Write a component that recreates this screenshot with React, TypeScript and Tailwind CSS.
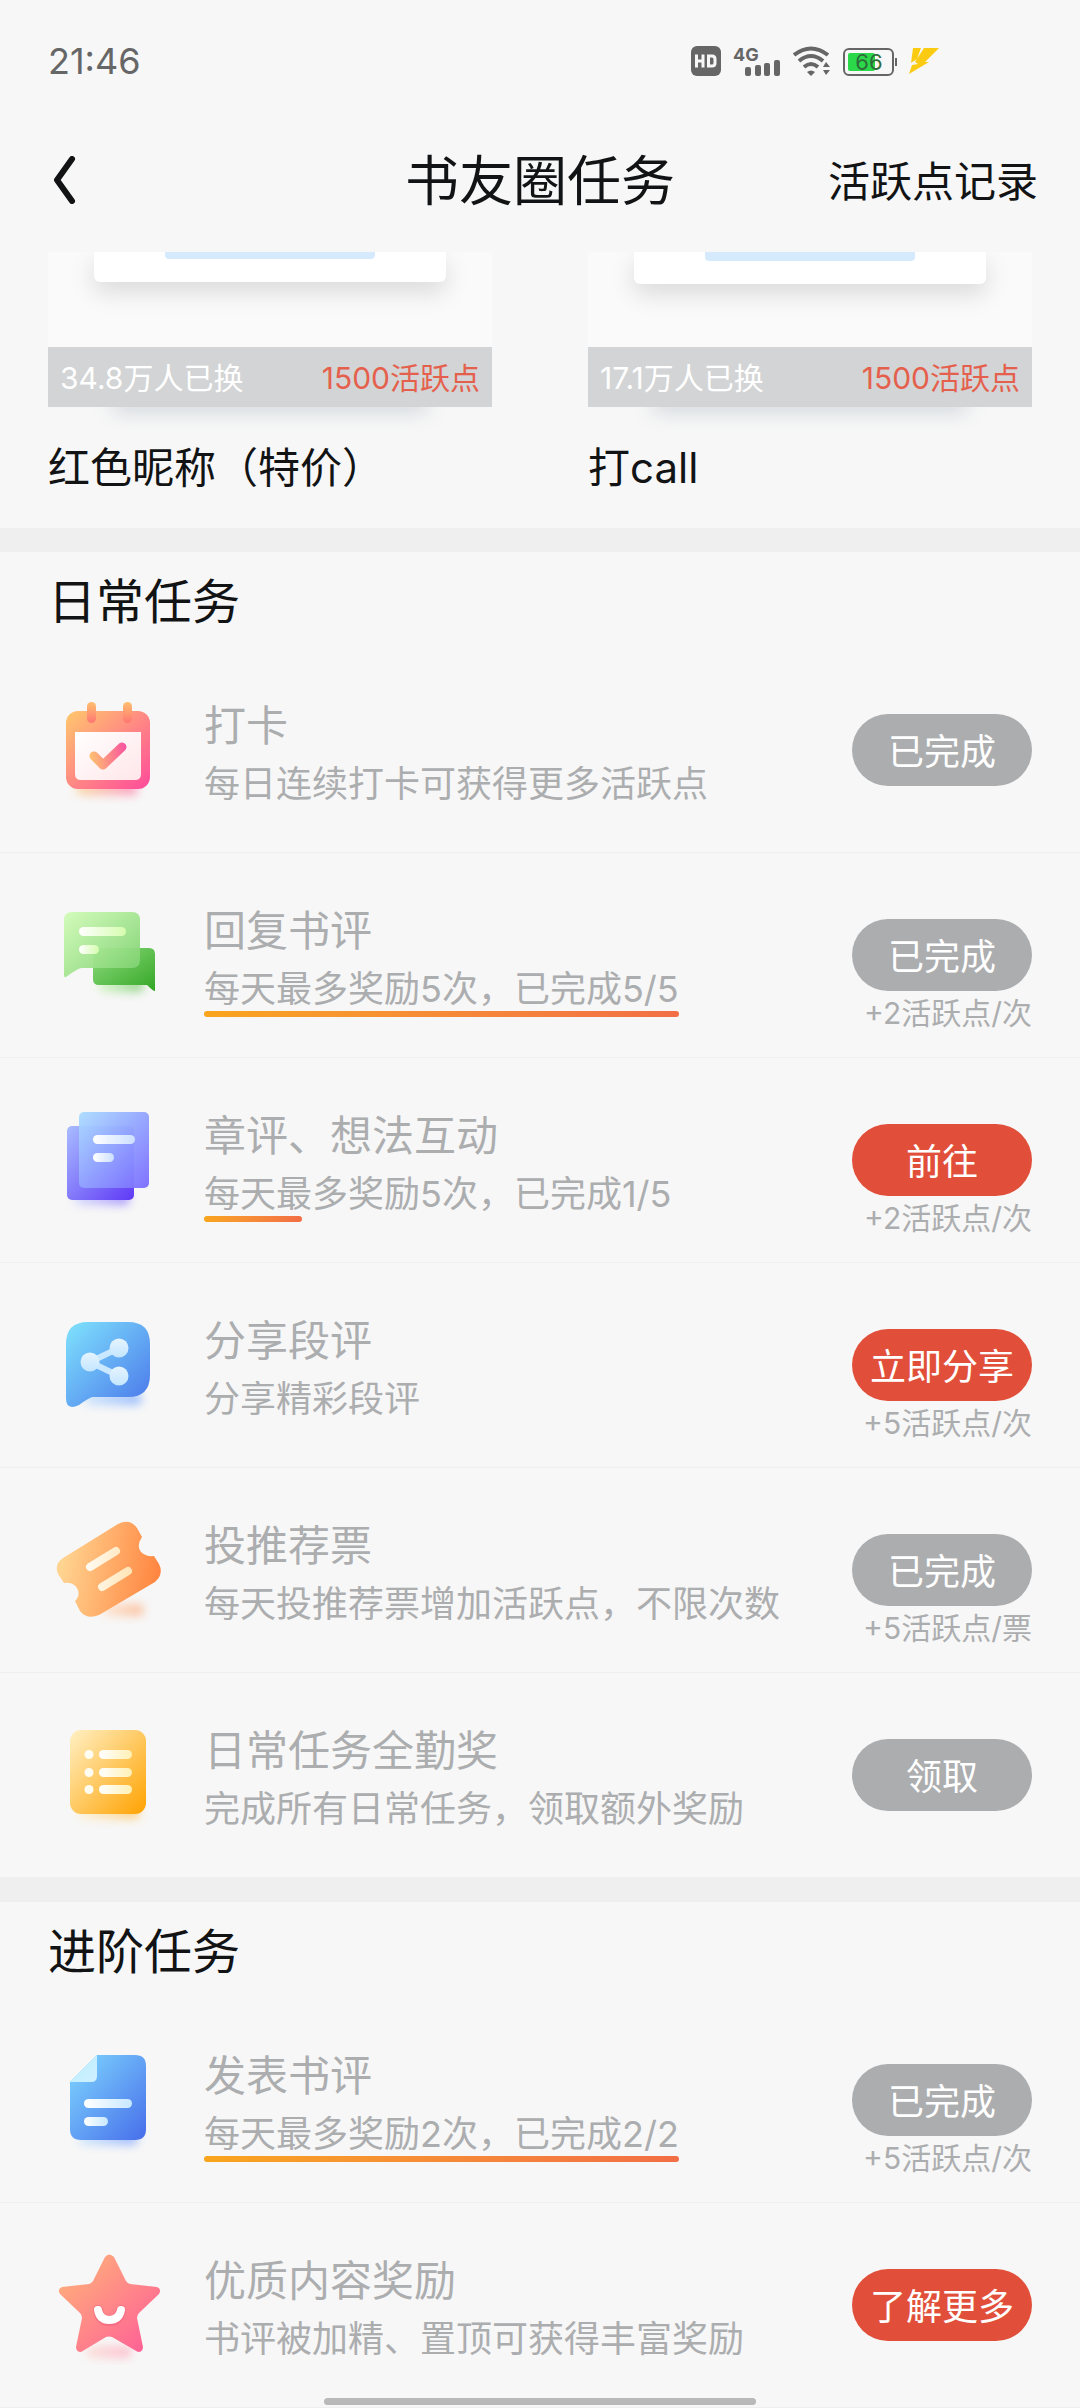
import type { ReactNode } from "react";

const FONT = "font-[Inter,'Noto_Sans_CJK_SC',sans-serif]";

function Stops({ id, from, to, x1 = 0, y1 = 0, x2 = 1, y2 = 1 }: { id: string; from: string; to: string; x1?: number; y1?: number; x2?: number; y2?: number }) {
  return (
    <linearGradient id={id} x1={x1} y1={y1} x2={x2} y2={y2}>
      <stop offset="0" stopColor={from} />
      <stop offset="1" stopColor={to} />
    </linearGradient>
  );
}

function Icon({ children }: { children: ReactNode }) {
  return (
    <svg viewBox="0 0 120 120" className="size-[120px] shrink-0" aria-hidden="true">
      {children}
    </svg>
  );
}

function Glow({ id, from, to, x, y, width }: { id: string; from: string; to: string; x: number; y: number; width: number }) {
  return (
    <>
      <defs>
        <Stops id={id + "-g"} from={from} to={to} y2={0} />
        <filter id={id + "-b"} x="-30%" y="-150%" width="160%" height="400%">
          <feGaussianBlur stdDeviation="5" />
        </filter>
      </defs>
      <rect x={x} y={y} width={width} height="12" rx="6" fill={`url(#${id}-g)`} filter={`url(#${id}-b)`} opacity="0.6" />
    </>
  );
}

function CalendarIcon() {
  return (
    <Icon>
      <Glow id="cal-glow" from="#ffc76f" to="#ff5a9c" x={28} y={93} width={62} />
      <defs>
        <Stops id="cal-body" from="#ffc86c" to="#ff4a9b" />
        <Stops id="cal-tab" from="#ffc070" to="#ff7672" x2={0} />
        <Stops id="cal-page" from="#ffffff" to="#ffe6e9" />
        <linearGradient id="cal-check" gradientUnits="userSpaceOnUse" x1="42" y1="66" x2="78" y2="60">
          <stop offset="0" stopColor="#ffc070" />
          <stop offset="1" stopColor="#f9559f" />
        </linearGradient>
      </defs>
      <rect x="18" y="21" width="84" height="78" rx="12" fill="url(#cal-body)" />
      <rect x="39" y="12" width="9" height="21" rx="4.500" fill="url(#cal-tab)" />
      <rect x="75" y="12" width="9" height="21" rx="4.500" fill="url(#cal-tab)" />
      <path d="M27 42H93V84Q93 90 87 90H33Q27 90 27 84Z" fill="url(#cal-page)" />
      <path d="M46 66L55 75L74 57" fill="none" stroke="url(#cal-check)" strokeWidth="9" strokeLinecap="round" strokeLinejoin="round" />
    </Icon>
  );
}

function ChatIcon() {
  return (
    <Icon>
      <Glow id="chat-glow" from="#c8f5b0" to="#4cb83c" x={50} y={85} width={46} />
      <defs>
        <Stops id="chat-back" from="#8fdb7e" to="#33a725" />
        <Stops id="chat-front" from="#d2fcb8" to="#79cf6c" />
        <Stops id="chat-line" from="#ffffff" to="#d5fcae" y2={0} />
      </defs>
      <path d="M51 53H101Q107 53 107 59V96Q105 96 99 90H51Q45 90 45 84V59Q45 53 51 53Z" fill="url(#chat-back)" />
      <path d="M24 17H84Q92 17 92 25V65Q92 73 84 73H34Q30 73 18 82Q16 83 16 80V25Q16 17 24 17Z" fill="url(#chat-front)" fillOpacity="0.94" />
      <rect x="31" y="32" width="47" height="9" rx="4.500" fill="url(#chat-line)" />
      <rect x="31" y="50" width="20" height="9" rx="4.500" fill="url(#chat-line)" />
    </Icon>
  );
}

function PagesIcon() {
  return (
    <Icon>
      <Glow id="page-glow" from="#c5ccff" to="#7355ff" x={26} y={93} width={56} />
      <defs>
        <Stops id="page-back" from="#a8bcff" to="#5f38f6" />
        <Stops id="page-front" from="#abdcff" to="#7a6bff" />
        <Stops id="page-line" from="#ffffff" to="#ccdfff" y2={0} />
      </defs>
      <rect x="19" y="26" width="67" height="74" rx="5" fill="url(#page-back)" />
      <rect x="31" y="12" width="70" height="76" rx="5" fill="url(#page-front)" fillOpacity="0.95" />
      <rect x="45" y="35" width="42" height="9" rx="4.500" fill="url(#page-line)" />
      <rect x="45" y="53" width="21" height="9" rx="4.500" fill="url(#page-line)" />
    </Icon>
  );
}

function ShareIcon() {
  return (
    <Icon>
      <Glow id="share-glow" from="#b8dcff" to="#5a95ff" x={36} y={88} width={58} />
      <defs>
        <Stops id="share-body" from="#7fe3fd" to="#4a76ea" />
        <Stops id="share-node" from="#e6f4ff" to="#c4e6ff" x2={0} />
      </defs>
      <path d="M40 17H80Q102 17 102 39V70Q102 92 80 92H45Q42 92 31 100Q18 106 18 93V39Q18 17 40 17Z" fill="url(#share-body)" />
      <path d="M71 43L42 57L71 71" fill="none" stroke="#cae8ff" strokeWidth="6" />
      <circle cx="42" cy="57" r="9.500" fill="url(#share-node)" />
      <circle cx="71" cy="43" r="9.500" fill="url(#share-node)" />
      <circle cx="71" cy="71" r="9.500" fill="url(#share-node)" />
    </Icon>
  );
}

function TicketIcon() {
  return (
    <Icon>
      <Glow id="ticket-glow" from="#ffe0c4" to="#ff9a60" x={54} y={94} width={42} />
      <defs>
        <linearGradient id="ticket-body" gradientUnits="userSpaceOnUse" x1="14" y1="50" x2="110" y2="66">
          <stop offset="0" stopColor="#ffd491" />
          <stop offset="1" stopColor="#ff8641" />
        </linearGradient>
        <linearGradient id="ticket-line" gradientUnits="userSpaceOnUse" x1="40" y1="60" x2="82" y2="60">
          <stop offset="0" stopColor="#fffaf0" />
          <stop offset="1" stopColor="#ffe5b8" />
        </linearGradient>
      </defs>
      <path
        d="M15 48L70 14Q82 8 89 18L94 27Q88 36 93 42Q98 47 106 46L111 54Q116 64 107 72L51 105Q39 110 32 101L27 91Q33 85 29 78Q25 72 16 73L10 64Q6 54 15 48Z"
        fill="url(#ticket-body)"
      />
      <path d="M42 57L68 41M54 77L80 61" stroke="url(#ticket-line)" strokeWidth="8" strokeLinecap="round" />
    </Icon>
  );
}

function ListIcon() {
  return (
    <Icon>
      <Glow id="list-glow" from="#fff0c8" to="#ffb432" x={30} y={92} width={62} />
      <defs>
        <Stops id="list-body" from="#fff0c4" to="#ffa200" />
        <Stops id="list-line" from="#ffffff" to="#fff0b4" y2={0} />
      </defs>
      <rect x="22" y="15" width="76" height="84" rx="11" fill="url(#list-body)" />
      {[35, 53, 70].map((y) => (
        <g key={y}>
          <circle cx="41" cy={y + 4.5} r="4.500" fill="#fffdf2" />
          <rect x="51" y={y} width="33" height="9" rx="4.500" fill="url(#list-line)" />
        </g>
      ))}
    </Icon>
  );
}

function DocumentIcon() {
  return (
    <Icon>
      <Glow id="doc-glow" from="#c0e4ff" to="#5a88ff" x={30} y={93} width={60} />
      <defs>
        <Stops id="doc-body" from="#7fd8ff" to="#476eea" />
        <Stops id="doc-fold" from="#b8efff" to="#d0f0ff" />
        <Stops id="doc-line" from="#ffffff" to="#c8e8ff" y2={0} />
      </defs>
      <path d="M49 15H87Q98 15 98 26V89Q98 100 87 100H33Q22 100 22 89V42Z" fill="url(#doc-body)" />
      <path d="M49 15V36Q49 42 43 42H22Z" fill="url(#doc-fold)" />
      <rect x="36" y="59" width="48" height="9" rx="4.500" fill="url(#doc-line)" />
      <rect x="36" y="77" width="24" height="9" rx="4.500" fill="url(#doc-line)" />
    </Icon>
  );
}

function StarIcon() {
  return (
    <Icon>
      <Glow id="star-glow" from="#ffd2c8" to="#ff9ab4" x={38} y={101} width={46} />
      <defs>
        <Stops id="star-body" from="#ffb878" to="#ff5a98" />
      </defs>
      <path
        d="M57 12Q61 7 66 12L78 36Q79 38 82 39L109 42Q114 44 111 49L91 68Q89 70 89 73L95 102Q95 107 90 107L64 92Q61 91 58 92L33 107Q28 107 28 102L34 73Q34 70 32 68L12 49Q9 44 14 42L41 39Q44 38 45 36Z"
        fill="url(#star-body)"
      />
      <path d="M50 65Q52 76 61 76Q71 76 73 65" fill="none" stroke="#d93a6a" strokeOpacity="0.25" strokeWidth="10" strokeLinecap="round" />
      <path d="M50 65Q52 75 61 75Q71 75 73 65" fill="none" stroke="#fff" strokeWidth="8" strokeLinecap="round" />
    </Icon>
  );
}

type Task = {
  icon: ReactNode;
  title: string;
  text: string;
  progress?: number;
  action: string;
  active?: boolean;
  reward?: string;
};

const daily: Task[] = [
  { icon: <CalendarIcon />, title: "打卡", text: "每日连续打卡可获得更多活跃点", action: "已完成" },
  { icon: <ChatIcon />, title: "回复书评", text: "每天最多奖励5次，已完成5/5", progress: 100, action: "已完成", reward: "+2活跃点/次" },
  { icon: <PagesIcon />, title: "章评、想法互动", text: "每天最多奖励5次，已完成1/5", progress: 21, action: "前往", active: true, reward: "+2活跃点/次" },
  { icon: <ShareIcon />, title: "分享段评", text: "分享精彩段评", action: "立即分享", active: true, reward: "+5活跃点/次" },
  { icon: <TicketIcon />, title: "投推荐票", text: "每天投推荐票增加活跃点，不限次数", action: "已完成", reward: "+5活跃点/票" },
  { icon: <ListIcon />, title: "日常任务全勤奖", text: "完成所有日常任务，领取额外奖励", action: "领取" },
];

const advanced: Task[] = [
  { icon: <DocumentIcon />, title: "发表书评", text: "每天最多奖励2次，已完成2/2", progress: 100, action: "已完成", reward: "+5活跃点/次" },
  { icon: <StarIcon />, title: "优质内容奖励", text: "书评被加精、置顶可获得丰富奖励", action: "了解更多", active: true },
];

function TaskRow({ task }: { task: Task }) {
  return (
    <li className="flex min-h-[205px] items-start border-b border-[#efefef] px-12">
      <div className="mt-[42px]">{task.icon}</div>
      <div className="ml-9 mt-12 flex min-w-0 flex-1 flex-col items-start whitespace-nowrap text-[#acadaf]">
        <h3 className="text-[42px] leading-[60px]">{task.title}</h3>
        <div className="mt-1.5">
          <p className="text-[36px] leading-[44px]">{task.text}</p>
          {task.progress !== undefined && (
            <div className="h-1.5 rounded-full bg-linear-to-r from-[#f9a51c] to-[#f26e45]" style={{ width: `${task.progress}%` }} />
          )}
        </div>
      </div>
      <div className="mt-[66px] flex shrink-0 flex-col items-end">
        <button
          type="button"
          className={`h-[72px] w-[180px] rounded-full pt-1 text-[36px] leading-[68px] text-white ${task.active ? "bg-[#e14f3a]" : "bg-[#acadaf]"}`}
        >
          {task.action}
        </button>
        {task.reward && <span className="whitespace-nowrap text-[30px] leading-[44px] text-[#acadaf]">{task.reward}</span>}
      </div>
    </li>
  );
}

function TaskSection({ title, tasks }: { title: string; tasks: Task[] }) {
  return (
    <section className="border-t-[24px] border-[#efefef]">
      <h2 className="px-12 pt-1 text-[48px] leading-[92px] text-[#121314]">{title}</h2>
      <ul>
        {tasks.map((task) => (
          <TaskRow key={task.title} task={task} />
        ))}
      </ul>
    </section>
  );
}

function RewardCard({ title, count, tall }: { title: string; count: string; tall?: boolean }) {
  return (
    <article className="min-w-0 flex-1">
      <div className="relative">
        <div className="absolute inset-x-16 bottom-0 h-4 rounded-full shadow-[0_4px_20px_rgba(150,165,180,0.45)]" />
        <div className="relative h-[95px] overflow-hidden bg-[#fafafa] px-[46px]">
          <div className={`rounded-b-md bg-white px-[71px] shadow-[0_10px_24px_rgba(0,0,0,0.13)] ${tall ? "h-8" : "h-[30px]"}`}>
            <div className={`rounded-b-sm bg-[#d6eafd] ${tall ? "h-[9px]" : "h-[7px]"}`} />
          </div>
        </div>
        <div className="relative flex h-[60px] items-center justify-between bg-[#d3d4d5] px-3 pt-0.5 text-[30px]">
          <span className="text-white">{count}</span>
          <span className="text-[#e5604c]">1500活跃点</span>
        </div>
      </div>
      <h3 className="mt-[31px] text-[42px] leading-[60px] text-[#121314]">{title}</h3>
    </article>
  );
}

function StatusBar() {
  return (
    <div className="flex h-[120px] items-center justify-between pl-12 pr-[141px] pt-0.5 text-[#666]">
      <span className="text-[36px]">21:46</span>
      <div className="flex items-center gap-3">
        <svg viewBox="0 0 30 32" className="h-8 w-[30px]" aria-label="HD">
          <rect y="1" width="30" height="30" rx="6" fill="#666" />
          <path d="M5.500 9.500V22.500M12 9.500V22.500M5.500 16H12M17.500 11H21Q24 11 24 14V18Q24 21 21 21H17.500Z" fill="none" stroke="#f7f7f7" strokeWidth="3" />
        </svg>
        <svg viewBox="0 0 48 32" className="h-8 w-12 overflow-visible" aria-label="4G">
          <text x="0" y="16" fontSize="18" fontWeight="700" fill="#666">4G</text>
          <g fill="#666">
            <rect x="12" y="22" width="6" height="9" rx="2" />
            <rect x="22" y="20" width="6" height="11" rx="2" />
            <rect x="31" y="18" width="6" height="13" rx="2" />
            <rect x="41" y="15" width="6" height="16" rx="2" />
          </g>
        </svg>
        <svg viewBox="0 0 38 32" className="h-8 w-[38px]" aria-label="Wi-Fi">
          <path d="M1 10Q18 -3 35 10M6 16Q18 6 30 16M11 22Q18 16 25 22" fill="none" stroke="#666" strokeWidth="4" />
          <path d="M14 27Q18 24 22 27L18 31ZM30 22L33 17L37 22ZM30 25H37L33 30Z" fill="#666" />
        </svg>
        <svg viewBox="0 0 54 32" className="h-8 w-[54px]" aria-label="66%">
          <rect x="1" y="4" width="49" height="26" rx="5" fill="none" stroke="#666" strokeWidth="2" />
          <rect x="5" y="8" width="27" height="18" rx="2" fill="#2bd84a" />
          <rect x="52" y="13" width="2" height="8" fill="#666" />
          <text x="26" y="25" fontSize="22" textAnchor="middle" fill="#2f6a3a">66</text>
        </svg>
        <svg viewBox="0 0 30 32" className="h-8 w-[30px]" aria-hidden="true">
          <path d="M4 3H12L8 14L2 18ZM15 3H30L16 17H20L0 29L3 20L9 19L6 17Z" fill="#fbcb12" />
        </svg>
      </div>
    </div>
  );
}

export default function App() {
  return (
    <div className={`min-h-screen overflow-hidden bg-[#f7f7f7] ${FONT}`}>
      <StatusBar />
      <header className="grid h-[132px] grid-cols-[1fr_auto_1fr] items-start px-[42px] text-[#121314]">
        <button type="button" aria-label="返回" className="ml-1.5 mt-9 size-12 justify-self-start">
          <svg viewBox="0 0 48 48" className="size-12" aria-hidden="true">
            <path d="M24 3L9 24L24 45" fill="none" stroke="#121314" strokeWidth="6" strokeLinecap="round" strokeLinejoin="round" />
          </svg>
        </button>
        <h1 className="mt-[22px] text-[54px] leading-[80px]">书友圈任务</h1>
        <a href="#records" className="mt-8 justify-self-end text-[42px] leading-[60px]">活跃点记录</a>
      </header>
      <main>
        <section className="flex gap-24 px-12 pb-[30px]">
          <RewardCard title="红色昵称（特价）" count="34.8万人已换" />
          <RewardCard title="打call" count="17.1万人已换" tall />
        </section>
        <TaskSection title="日常任务" tasks={daily} />
        <TaskSection title="进阶任务" tasks={advanced} />
      </main>
      <div className="fixed bottom-[3px] left-1/2 h-[7px] w-[432px] -translate-x-1/2 rounded-full bg-[#b9b9b9]" />
    </div>
  );
}
